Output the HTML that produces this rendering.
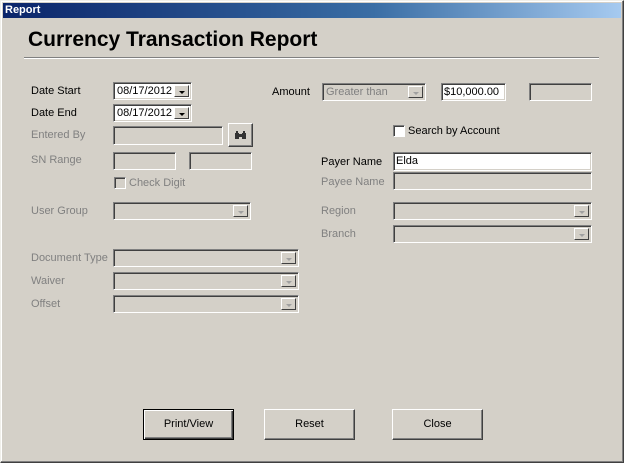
<!DOCTYPE html>
<html><head><meta charset="utf-8"><style>
*{box-sizing:border-box;margin:0;padding:0}
body{width:624px;height:463px;background:#d4d0c8;font-family:"Liberation Sans",sans-serif;font-size:11px;color:#000;position:relative;overflow:hidden}
.win{position:absolute;left:0;top:0;width:624px;height:463px;border:1px solid #f0efea;border-right-color:#404040;border-bottom-color:#404040;box-shadow:inset -1px -1px 0 #808080, inset 1px 1px 0 #fff}
.tb{position:absolute;left:3px;top:3px;width:618px;height:15px;background:linear-gradient(to right,#0a246a,#3a6ea5 60%,#a6caf0);color:#fff;font-weight:bold;font-size:11px;line-height:15px;padding-left:2px}
.a{position:absolute}
.lbl{position:absolute;font-size:11px;line-height:13px}
.dis{color:#808080}
.f{position:absolute;background:#d4d0c8;border-top:1px solid #808080;border-left:1px solid #808080;border-bottom:1px solid #fff;border-right:1px solid #fff;box-shadow:inset 1px 1px 0 #404040, inset -1px -1px 0 #d4d0c8}
.w{background:#fff}
.f span{position:absolute;left:3px;top:2px;font-size:11px;line-height:13px}
.dd{position:absolute;right:2px;top:2px;bottom:2px;width:15px;background:#d4d0c8;border-top:1px solid #fff;border-left:1px solid #fff;border-right:1px solid #404040;border-bottom:1px solid #404040}
.dd:after{content:"";position:absolute;left:4px;top:5px;border-left:3px solid transparent;border-right:3px solid transparent;border-top:3px solid #000}
.dd.g:after{border-top-color:#a0a0a0}
.btn{position:absolute;height:31px;width:91px;background:#d4d0c8;border-top:1px solid #fff;border-left:1px solid #fff;border-right:1px solid #404040;border-bottom:1px solid #404040;box-shadow:inset -1px -1px 0 #808080;text-align:center;line-height:28px;font-size:11px}
.cb{position:absolute;width:12px;height:12px;background:#fff;border-top:1px solid #808080;border-left:1px solid #808080;border-bottom:1px solid #fff;border-right:1px solid #fff;box-shadow:inset 1px 1px 0 #404040}
</style></head><body>
<div class="win"></div>
<div class="tb">Report</div>
<div class="a" style="left:28px;top:28px;font-size:21px;font-weight:bold;line-height:24px">Currency Transaction Report</div>
<div class="a" style="left:24px;top:57px;width:575px;height:2px;border-top:1px solid #808080;border-bottom:1px solid #fff"></div>

<div class="lbl" style="left:31px;top:85px">Date Start</div>
<div class="lbl" style="left:31px;top:107px">Date End</div>
<div class="lbl dis" style="left:31px;top:129px">Entered By</div>
<div class="lbl dis" style="left:31px;top:154px">SN Range</div>
<div class="lbl dis" style="left:31px;top:205px">User Group</div>
<div class="lbl dis" style="left:31px;top:252px">Document Type</div>
<div class="lbl dis" style="left:31px;top:275px">Waiver</div>
<div class="lbl dis" style="left:31px;top:298px">Offset</div>

<div class="f w" style="left:113px;top:82px;width:79px;height:18px"><span style="color:#000">08/17/2012</span><div class="dd"></div></div>
<div class="f w" style="left:113px;top:104px;width:79px;height:18px"><span>08/17/2012</span><div class="dd"></div></div>
<div class="f" style="left:113px;top:126px;width:110px;height:19px"></div>
<div class="btn" style="left:228px;top:123px;width:25px;height:24px;line-height:20px"><svg width="13" height="10" viewBox="0 0 13 10" style="margin-top:6px"><path d="M1 3h4v6H1zM8 3h4v6H8zM2 1h2v2H2zM9 1h2v2H9zM5 4h3v3H5z" fill="#333"/></svg></div>
<div class="f" style="left:113px;top:152px;width:63px;height:18px"></div>
<div class="f" style="left:189px;top:152px;width:63px;height:18px"></div>
<div class="cb" style="left:114px;top:177px;background:#d4d0c8"></div>
<div class="lbl dis" style="left:129px;top:177px">Check Digit</div>
<div class="f" style="left:113px;top:202px;width:138px;height:18px"><div class="dd g"></div></div>
<div class="f" style="left:113px;top:249px;width:186px;height:18px"><div class="dd g"></div></div>
<div class="f" style="left:113px;top:272px;width:186px;height:18px"><div class="dd g"></div></div>
<div class="f" style="left:113px;top:295px;width:186px;height:18px"><div class="dd g"></div></div>

<div class="lbl" style="left:272px;top:86px">Amount</div>
<div class="f" style="left:322px;top:83px;width:104px;height:18px"><span class="dis" style="color:#808080">Greater than</span><div class="dd g"></div></div>
<div class="f w" style="left:441px;top:83px;width:65px;height:18px"><span style="left:2px">$10,000.00</span></div>
<div class="f" style="left:529px;top:83px;width:63px;height:18px"></div>
<div class="cb" style="left:393px;top:125px"></div>
<div class="lbl" style="left:408px;top:125px">Search by Account</div>
<div class="lbl" style="left:321px;top:156px">Payer Name</div>
<div class="lbl dis" style="left:321px;top:176px">Payee Name</div>
<div class="f w" style="left:393px;top:152px;width:199px;height:19px"><span style="left:2px">Elda</span></div>
<div class="f" style="left:393px;top:172px;width:199px;height:18px"></div>
<div class="lbl dis" style="left:321px;top:205px">Region</div>
<div class="lbl dis" style="left:321px;top:228px">Branch</div>
<div class="f" style="left:393px;top:202px;width:199px;height:18px"><div class="dd g"></div></div>
<div class="f" style="left:393px;top:225px;width:199px;height:18px"><div class="dd g"></div></div>

<div class="btn" style="left:143px;top:409px;border:1px solid #000;box-shadow:inset 1px 1px 0 #fff,inset -1px -1px 0 #404040,inset -2px -2px 0 #808080">Print/View</div>
<div class="btn" style="left:264px;top:409px">Reset</div>
<div class="btn" style="left:392px;top:409px">Close</div>
</body></html>
